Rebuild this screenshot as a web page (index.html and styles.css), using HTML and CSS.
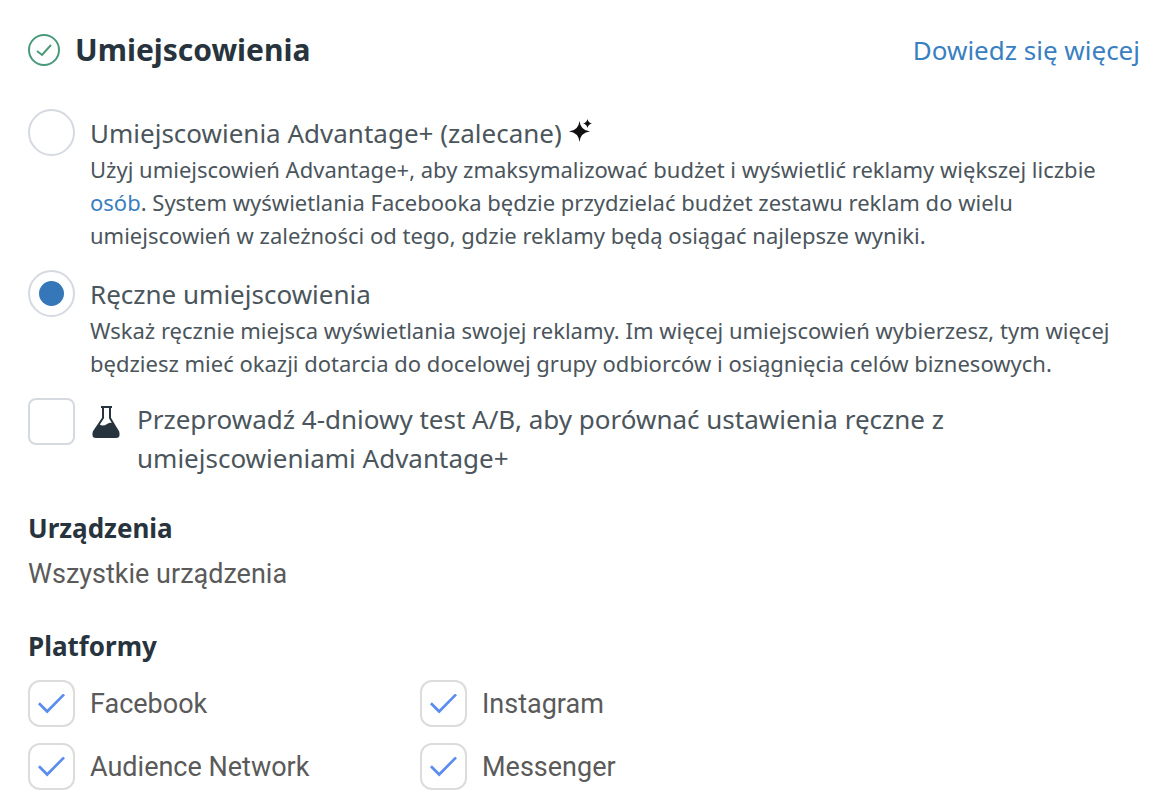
FILE: index.html
```html
<!DOCTYPE html>
<html lang="pl">
	<head>
		<title>Umiejscowienia</title>
		<meta charset="utf-8"/>
		<link rel="stylesheet" href="styles.css">
	</head>
	<body>
		<main>
			<header>
				<svg class="status" viewBox="0 0 32 32">
					<circle cx="16" cy="16" r="15"/>
					<path d="M9 17l5 4 9-10"/>
				</svg>
				<h1>Umiejscowienia</h1>
				<a class="more" href="#">Dowiedz się więcej</a>
			</header>

			<form>
				<div class="option">
					<input type="radio" name="placement" id="auto">
					<div class="optionText">
						<label for="auto">Umiejscowienia Advantage+ (zalecane)
							<svg class="sparkle" viewBox="0 0 24 24">
								<path d="M10.500 2q1 9.500 10.500 10.500q-9.500 1-10.500 10.500q-1-9.500-10.500-10.500q9.500-1 10.500-10.500z"/>
								<path d="M10.500 7l2 3.500 3.500 2-3.500 2-2 3.500-2-3.500-3.500-2 3.500-2z"/>
								<path d="M18.500 0q.8 3.700 4.500 4.500q-3.700.8-4.500 4.500q-.8-3.700-4.500-4.500q3.700-.8 4.500-4.500z"/>
							</svg>
						</label>
						<p>Użyj umiejscowień Advantage+, aby zmaksymalizować budżet i wyświetlić reklamy większej liczbie <a href="#">osób</a>. System wyświetlania Facebooka będzie przydzielać budżet zestawu reklam do wielu umiejscowień w zależności od tego, gdzie reklamy będą osiągać najlepsze wyniki.</p>
					</div>
				</div>

				<div class="option">
					<input type="radio" name="placement" id="manual" checked>
					<div class="optionText">
						<label for="manual">Ręczne umiejscowienia</label>
						<p>Wskaż ręcznie miejsca wyświetlania swojej reklamy. Im więcej umiejscowień wybierzesz, tym więcej będziesz mieć okazji dotarcia do docelowej grupy odbiorców i osiągnięcia celów biznesowych.</p>
					</div>
				</div>

				<div class="abTest">
					<input type="checkbox" id="abTest">
					<svg class="flask" viewBox="0 0 28 32">
						<path class="glass" d="M9 1h11M11 1v11L3 24M18 1v11l7 12"/>
						<path d="M7 18q4 3 8 0q3-2 6-1l6 8q2 7-3 7H4q-5 0-3-7z"/>
					</svg>
					<label for="abTest">Przeprowadź 4-dniowy test A/B, aby porównać ustawienia ręczne z umiejscowieniami Advantage+</label>
				</div>

				<h2>Urządzenia</h2>
				<p class="devices">Wszystkie urządzenia</p>

				<h2>Platformy</h2>
				<div class="platforms">
					<div class="platform"><input type="checkbox" id="facebook" checked><label for="facebook">Facebook</label></div>
					<div class="platform"><input type="checkbox" id="instagram" checked><label for="instagram">Instagram</label></div>
					<div class="platform"><input type="checkbox" id="audience" checked><label for="audience">Audience Network</label></div>
					<div class="platform"><input type="checkbox" id="messenger" checked><label for="messenger">Messenger</label></div>
				</div>
			</form>
		</main>
	</body>
</html>
```
FILE: styles.css
```css
* { box-sizing:border-box }
body {
	margin:0px;
	background:#ffffff;
	color:#4b555c;
	font-family:"Noto Sans", sans-serif;
	font-size:26px;
	line-height:36px;
}
main { padding:32px 24px 16px 28px; }
header {
	display:flex;
	align-items:center;
	margin-bottom:41px;
}
h1, h2, p { margin:0px; }
h1, h2 { color:#28343d; line-height:36px; }
h1 { font-size:30px; }
h2 { font-size:26px; }
a { color:#3a80c1; text-decoration:none; }

.status {
	width:32px;
	height:32px;
	margin-right:15px;
	fill:none;
	stroke:#4a9a7a;
	stroke-width:2;
}
.more { margin-left:auto; }

input {
	appearance:none;
	flex:none;
	width:47px;
	height:47px;
	margin:0px;
	border:2px solid #d5d9e0;
	background:#ffffff;
}
input[type=radio] {
	display:grid;
	place-items:center;
	border-radius:50%;
}
input[type=radio]:checked::before {
	content:"";
	width:25px;
	height:25px;
	border-radius:50%;
	background:#3577b9;
}
input[type=checkbox] {
	display:grid;
	place-items:center;
	border-radius:8px;
}
input[type=checkbox]:checked::before {
	content:"";
	width:27px;
	height:20px;
	background:#5b8def;
	clip-path:polygon(0 54%, 7% 44%, 34% 80%, 93% 0, 100% 9%, 34% 100%);
}

.option {
	display:flex;
	gap:15px;
	margin-bottom:18px;
}
.option label { display:block; padding-top:6px; }
.option p { margin-top:2px; font-size:22px; line-height:33px; }
.sparkle { width:24px; height:24px; fill:#111111; }

.abTest { display:flex; margin-bottom:32px; }
.flask {
	width:28px;
	height:32px;
	margin:8px 17px 0px;
	fill:#28343d;
}
.glass { fill:none; stroke:#28343d; stroke-width:2; }
.abTest label { max-width:840px; padding-top:2px; line-height:39px; }

.devices, .platforms { color:#5a5a5a; font-family:Roboto, sans-serif; font-size:27px; }
.devices { margin:10px 0px 36px; }
.platforms {
	display:grid;
	grid-template-columns:392px 1fr;
	row-gap:16px;
	margin-top:16px;
}
.platform { display:flex; align-items:center; gap:15px; }
.platform input { border-color:#dcdcdc; border-radius:12px; }
```
